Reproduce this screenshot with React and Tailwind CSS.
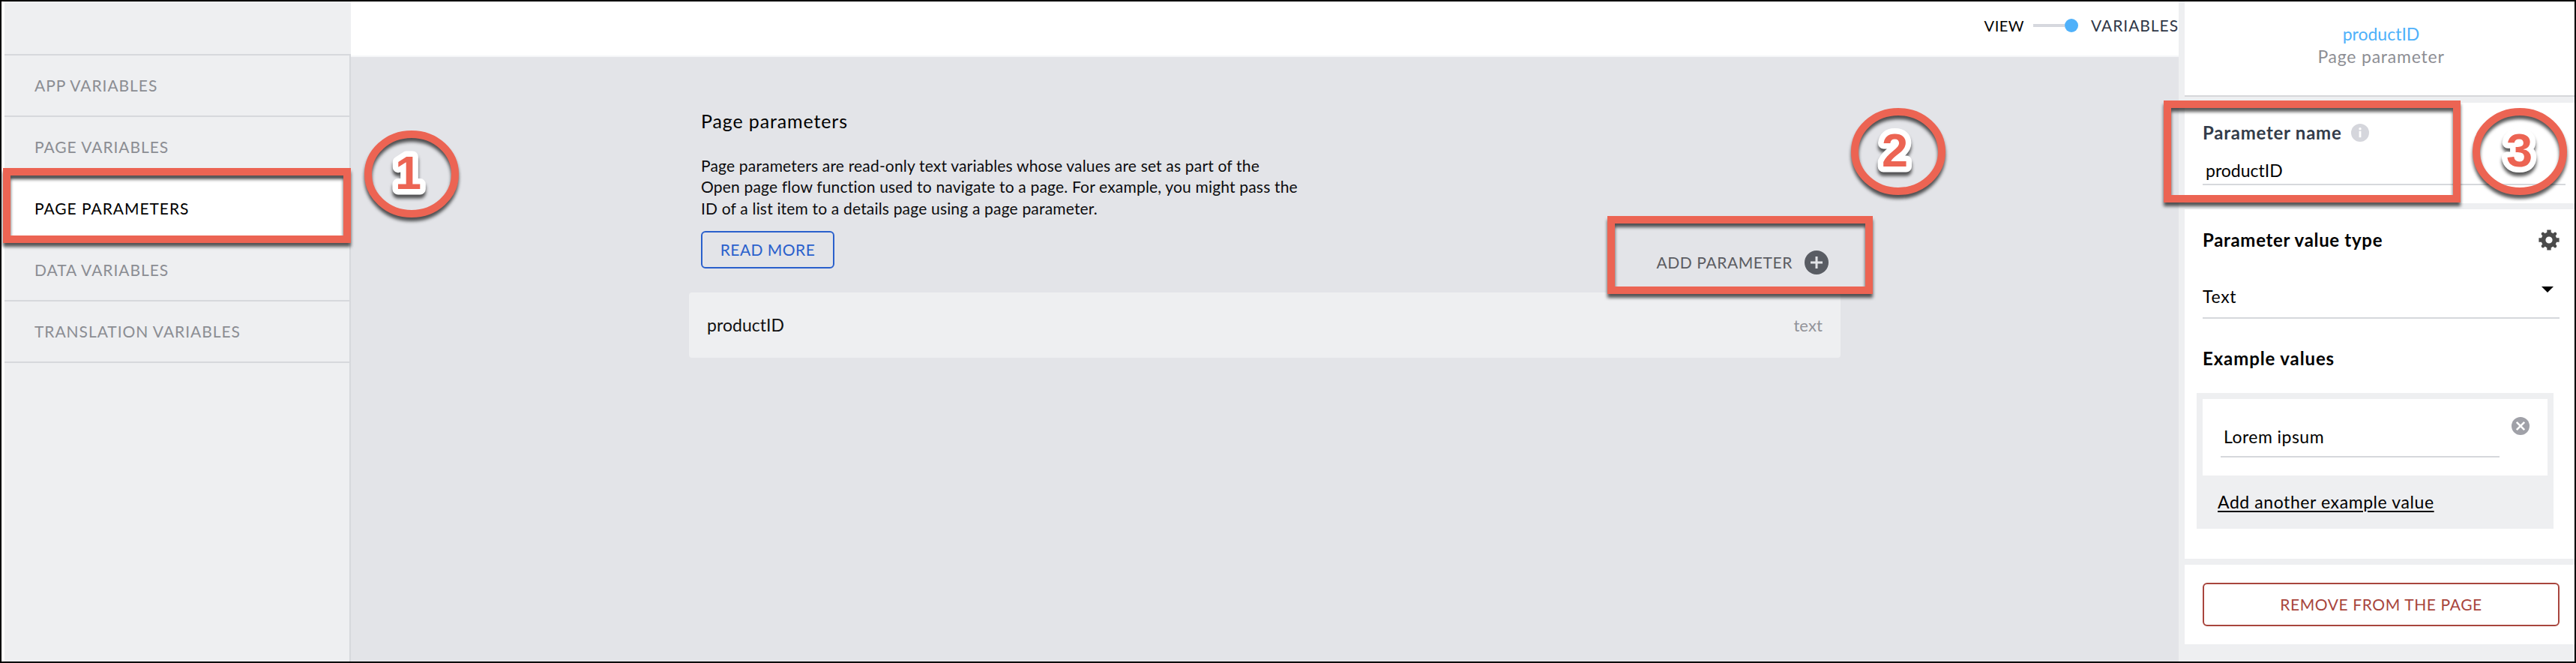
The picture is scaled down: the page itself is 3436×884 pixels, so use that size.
const NAV = [
  { label: "APP VARIABLES", active: false },
  { label: "PAGE VARIABLES", active: false },
  { label: "PAGE PARAMETERS", active: true },
  { label: "DATA VARIABLES", active: false },
  { label: "TRANSLATION VARIABLES", active: false },
];

function PlusCircle() {
  return (
    <svg className="size-8 shrink-0" viewBox="0 0 32 32">
      <circle cx="16" cy="16" r="16" fill="#595c63" />
      <path d="M16 8v16M8 16h16" stroke="#e3e4e8" strokeWidth="3" />
    </svg>
  );
}

function InfoIcon() {
  return (
    <svg className="size-6 shrink-0" viewBox="0 0 24 24">
      <circle cx="12" cy="12" r="12" fill="#d5d6dc" />
      <path d="M12 9.8v8.4" stroke="#fff" strokeWidth="2.8" />
      <circle cx="12" cy="6.8" r="1.7" fill="#fff" />
    </svg>
  );
}

function GearIcon() {
  return (
    <svg className="size-7 shrink-0" viewBox="0 0 28 28" fill="none" stroke="#4b4b4b">
      <circle cx="14" cy="14" r="7.5" strokeWidth="5.8" />
      <path
        d="M7.6 7.6l-1.7-1.7M20.4 20.4l1.7 1.7M7.6 20.4l-1.7 1.7M20.4 7.6l1.7-1.7"
        strokeWidth="4.4"
        strokeLinecap="round"
      />
      <path d="M14 6V.4M14 22v5.6M6 14H.4M22 14h5.6" strokeWidth="5.4" />
    </svg>
  );
}

function ClearIcon() {
  return (
    <svg className="size-6 shrink-0" viewBox="0 0 24 24">
      <circle cx="12" cy="12" r="12" fill="#a0a1a8" />
      <path d="M6.8 6.8l10.4 10.4M17.2 6.8L6.8 17.2" stroke="#fff" strokeWidth="2.6" />
    </svg>
  );
}

function Badge({ n, dx, className }) {
  return (
    <svg
      className={`absolute h-[116px] w-[126px] overflow-visible drop-shadow-[0_5px_2px_rgba(0,0,0,0.65)] ${className}`}
      viewBox="0 0 126 116"
    >
      <ellipse cx="63" cy="58" rx="58" ry="53" fill="none" stroke="#ec6453" strokeWidth="10" />
      <text
        x={dx}
        y="78"
        textAnchor="middle"
        className="font-['Liberation_Sans',sans-serif] text-[63px] font-bold [paint-order:stroke]"
        fill="#ec6453"
        stroke="#fff"
        strokeWidth="15"
        strokeLinejoin="round"
      >
        {n}
      </text>
    </svg>
  );
}

function Highlight({ className }) {
  return (
    <div
      className={`absolute border-10 border-[#ec6453] drop-shadow-[0_5px_2px_rgba(0,0,0,0.65)] ${className}`}
    />
  );
}

function Sidebar() {
  return (
    <aside className="flex w-[462px] shrink-0 flex-col bg-[#eeeff1]">
      <div className="h-[70px] shrink-0" />
      <nav className="flex grow flex-col border-r-2 border-[#d6d8dc]">
        {NAV.map((item) => (
          <div
            key={item.label}
            className={`flex h-[82px] items-center border-t-2 border-[#d6d8dc] pl-10 text-[21px] tracking-[0.95px] ${
              item.active ? "bg-white text-black" : "text-[#8b8d93]"
            }`}
          >
            {item.label}
          </div>
        ))}
        <div className="h-0.5 bg-[#d6d8dc]" />
      </nav>
    </aside>
  );
}

function Main() {
  return (
    <main className="flex grow flex-col bg-[#e3e4e8]">
      <header className="flex h-[74px] shrink-0 items-center justify-end border-b-2 border-[#f5f6f8] bg-white pb-2 text-[20px]">
        <span className="tracking-[0.5px] text-black">VIEW</span>
        <span className="ml-3 h-1 w-[42px] bg-[#d6d8de]" />
        <span className="size-[18px] rounded-full bg-[#4fb1fa]" />
        <span className="ml-[17px] text-[21px] tracking-[0.95px] text-[#2f3747]">VARIABLES</span>
      </header>
      <section className="ml-[451px] flex w-[1536px] flex-col pt-[69px]">
        <div className="flex items-end justify-between pr-4 pl-4">
          <div className="flex flex-col items-start pb-2">
            <h1 className="text-[25px] leading-8 tracking-[0.87px] text-black">Page parameters</h1>
            <p className="mt-[30px] h-[85px] text-[21px] leading-[28.4px] tracking-[0.18px] text-[#0c0c0e]">
              Page parameters are read-only text variables whose values are set as part of the
              <br />
              Open page flow function used to navigate to a page. For example, you might pass the
              <br />
              ID of a list item to a details page using a page parameter.
            </p>
            <button className="mt-4 h-[50px] w-[178px] rounded-[6px] border-2 border-[#2a60cc] text-[21px] tracking-[0.45px] text-[#2a60cc]">
              READ MORE
            </button>
          </div>
          <div className="flex items-center gap-4 text-[21px] tracking-[0.58px] text-[#5b5c62]">
            ADD PARAMETER
            <PlusCircle />
          </div>
        </div>
        <div className="mt-6 flex h-[87px] items-center justify-between rounded-[4px] bg-[#eeeff1] pr-6 pl-6">
          <span className="text-[23px] tracking-[0.05px] text-[#111]">productID</span>
          <span className="text-[22px] tracking-[0.1px] text-[#929399]">text</span>
        </div>
      </section>
    </main>
  );
}

function Inspector() {
  return (
    <aside className="flex w-[528px] shrink-0 flex-col gap-2 border-l-8 border-[#eeeff1] bg-[#eeeff1] text-[23px] text-black">
      <header className="flex h-[127px] flex-col items-center border-b-2 border-[#d6d7da] bg-white pt-7 pl-1 leading-[30px]">
        <span className="text-[#4fb1fa]">productID</span>
        <span className="tracking-[0.78px] text-[#8d8e94]">Page parameter</span>
      </header>

      <section className="flex h-[134px] flex-col bg-white pt-6 pl-6">
        <div className="flex h-8 items-center gap-3 text-[24px] font-bold tracking-[0.75px] text-[#333c4a]">
          Parameter name
          <InfoIcon />
        </div>
        <div className="mt-4 flex h-[38px] w-[484px] items-center border-b-2 border-[#d6d8dc] pl-1">
          productID
        </div>
      </section>

      <section className="flex h-[466px] flex-col bg-white pt-6 pr-5 pl-6">
        <div className="flex h-[34px] items-center justify-between text-[24px] font-bold tracking-[0.68px]">
          Parameter value type
          <GearIcon />
        </div>
        <div className="mt-[30px] flex h-[58px] items-center justify-between border-b-2 border-[#d6d8dc] pr-2 tracking-[0.7px]">
          Text
          <svg className="mb-[18px] h-2 w-4" viewBox="0 0 16 8">
            <path d="M0 0h16L8 8z" />
          </svg>
        </div>
        <div className="mt-9 flex h-[34px] items-center text-[24px] font-bold tracking-[0.88px]">
          Example values
        </div>
        <div className="mt-[29px] -ml-2 flex h-[181px] w-[476px] flex-col bg-[#eeeff1] px-2 pt-2">
          <div className="flex h-[102px] items-start justify-between bg-white px-6 pt-6">
            <div className="flex h-[54px] w-[372px] items-center border-b-2 border-[#d6d8dc] pl-1 tracking-[0.46px]">
              Lorem ipsum
            </div>
            <ClearIcon />
          </div>
          <div className="flex grow items-center pl-5 tracking-[0.58px]">
            <a className="underline decoration-2 underline-offset-[3px]">Add another example value</a>
          </div>
        </div>
      </section>

      <section className="flex h-[106px] bg-white pt-6 pl-6">
        <button className="h-[58px] w-[476px] rounded-[6px] border-2 border-[#a8453d] text-[21px] tracking-[0.6px] text-[#a8453d]">
          REMOVE FROM THE PAGE
        </button>
      </section>
    </aside>
  );
}

export default function App() {
  return (
    <div className="relative flex h-[884px] w-[3436px] overflow-hidden border-2 border-black bg-white pl-1 font-[Lato,sans-serif]">
      <Sidebar />
      <Main />
      <Inspector />

      <Highlight className="top-[222px] left-[2px] h-[100px] w-[464px]" />
      <Highlight className="top-[286px] left-[2142px] h-[104px] w-[354px]" />
      <Highlight className="top-[132px] left-[2884px] h-[136px] w-[396px]" />
      <Badge n="1" dx="58.5" className="top-[172px] left-[484px]" />
      <Badge n="2" dx="58.5" className="top-[142px] left-[2467px]" />
      <Badge n="3" dx="62.5" className="top-[142px] left-[3296px]" />
    </div>
  );
}
